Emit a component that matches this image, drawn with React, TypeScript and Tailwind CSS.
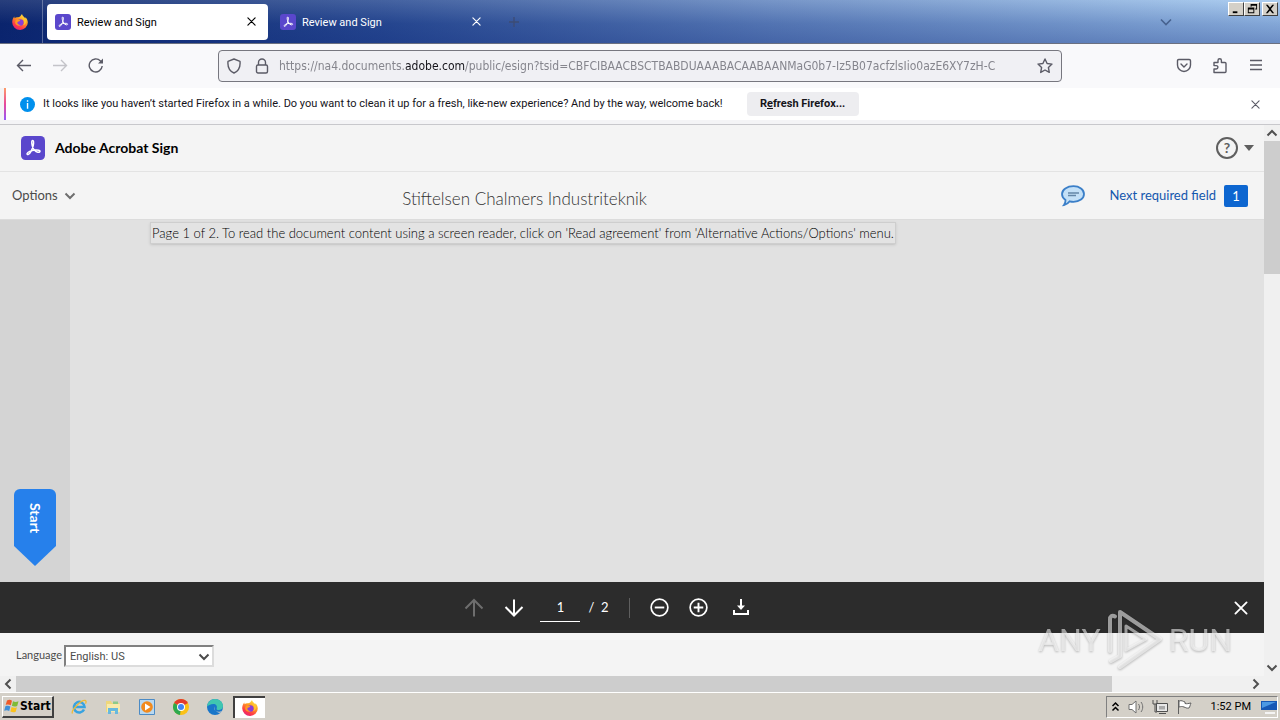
import React from 'react';

const AcrobatLogo: React.FC<{ size: number }> = ({ size }) => (
    <svg width={size} height={size} viewBox="0 0 24 24" fill="none" className="shrink-0">
        <rect width="24" height="24" rx="4.5" fill="#5a47cc" />
        <path
            d="M11.3 4.6c1.4-.5 1.6 2 .9 5-.9 3.8-3.2 8.7-5.1 9-1.7.2-1.4-1.9 1.6-3.2 3.1-1.4 8.4-2.1 9.9-.8 1 .9-.2 2-1.8 1.7-2.4-.5-4.9-3.6-5.6-6.8-.5-2.3-.7-4.6.1-4.9z"
            stroke="#fff"
            strokeWidth="1.5"
            strokeLinejoin="round"
        />
    </svg>
);

const FirefoxIcon: React.FC<{ id: string }> = ({ id }) => (
    <svg width="16" height="16" viewBox="0 0 16 16" className="shrink-0">
        <defs>
            <linearGradient id={id} x1="0.8" y1="0" x2="0.25" y2="1">
                <stop offset="0" stopColor="#fff04a" />
                <stop offset="0.4" stopColor="#ff9a22" />
                <stop offset="0.75" stopColor="#ff3b47" />
                <stop offset="1" stopColor="#e0207c" />
            </linearGradient>
        </defs>
        <path
            d="M10 0c.3 1.5 1.3 2.2 2.3 3.2.4.4.7.8.9 1.2l.2-1.2c1.4 1.4 2.4 3.2 2.4 5.2A7.7 7.7 0 0 1 8 16 7.8 7.8 0 0 1 .2 8.3C.2 6 1 4 2.3 2.5l.3 1.8C3.6 3.3 4.7 3 6 3.3 7.5 3.3 8.7 2 10 0z"
            fill={`url(#${id})`}
        />
        <circle cx="8.3" cy="8.6" r="3.3" fill="#8a3fd8" />
        <path d="M4 6c1.5-.8 3-.6 4.3.4-1 1.2-2.8.6-3 2.3.3 1.8 2.2 2.6 4 2-1.8 2-5.3 1-6-1.4C3 8 3.2 6.8 4 6z" fill="#ff9a22" />
        <path d="M9.5 2.2c.2 2.2 2.7 3 2.7 6 0 1.2-.5 2.2-1.2 3 2.6-.6 3.6-2.9 3-5.2-.6-1.7-3.4-2.2-4.5-3.800z" fill="#ffc52e" />
    </svg>
);

const Cross: React.FC<{ size: number; width?: number }> = ({ size, width = 1.2 }) => (
    <svg width={size} height={size} viewBox="0 0 10 10" stroke="currentColor" strokeWidth={width} strokeLinecap="round">
        <path d="M1 1l8 8M9 1L1 9" />
    </svg>
);

const Chevron: React.FC<{ className?: string }> = ({ className }) => (
    <svg width="12" height="12" viewBox="0 0 12 12" fill="none" stroke="currentColor" strokeWidth="2" className={className}>
        <path d="M1.5 3.5L6 8l4.5-4.5" />
    </svg>
);

const WindowButton: React.FC<{ label: string; children: React.ReactNode }> = ({ label, children }) => (
    <button aria-label={label} className="flex h-3.5 w-4 items-center justify-center border border-b-[#404040] border-l-white border-r-[#404040] border-t-white bg-[#d4d0c8]">
        <svg width="12" height="12" viewBox="0 0 13 13">{children}</svg>
    </button>
);

const TabStrip: React.FC = () => (
    <header className="flex h-11 border-b border-[#6b7080] bg-[linear-gradient(to_bottom,rgba(255,255,255,0.12),rgba(10,36,120,0.2)_55%,rgba(10,36,120,0.35)),linear-gradient(to_right,#0a246a,#2b4d94_30%,#6487c0_60%,#a2c8ef)]">
        <div className="flex w-[43px] items-center justify-center border-r border-white/30 pr-0.5">
            <FirefoxIcon id="ff-tab" />
        </div>
        <div className="ml-1 flex h-9 w-[221px] items-center self-center rounded bg-white pl-2 pr-2.5 text-black">
            <AcrobatLogo size={16} />
            <span className="ml-1.5 flex-1 pt-1 text-[11px]">Review and Sign</span>
            <button aria-label="Close tab" className="p-0.5"><Cross size={9} width={1.3} /></button>
        </div>
        <div className="ml-1 flex h-9 w-[221px] items-center self-center pl-2 pr-2.5 text-white">
            <AcrobatLogo size={16} />
            <span className="ml-1.5 flex-1 pt-1 text-[11px]">Review and Sign</span>
            <button aria-label="Close tab" className="p-0.5"><Cross size={9} width={1.3} /></button>
        </div>
        <button aria-label="New tab" className="ml-4 text-[#3d4c74]">
            <svg width="10" height="10" viewBox="0 0 10 10" stroke="currentColor" strokeWidth="1.3"><path d="M5 0v10M0 5h10" /></svg>
        </button>
        <button aria-label="List all tabs" className="ml-auto mr-14 text-[#47628f]">
            <svg width="12" height="12" viewBox="0 0 12 12" fill="none" stroke="currentColor" strokeWidth="1.6"><path d="M1 3.5l5 5 5-5" /></svg>
        </button>
        <div className="mr-0.5 mt-0.5 flex h-3.5 text-black">
            <WindowButton label="Minimize"><path d="M3 9h5v2H3z" /></WindowButton>
            <WindowButton label="Restore"><path d="M5 1h7v6h-2V6h1V3H6v1H5zM2 5h7v6H2zm1 2v3h5V7z" fillRule="evenodd" /></WindowButton>
            <span className="w-0.5" />
            <WindowButton label="Close"><path d="M2 2h2l2.500 3L9 2h2L7.500 6.500 11 11H9L6.500 8 4 11H2l3.500-4.500z" /></WindowButton>
        </div>
    </header>
);

const NavBar: React.FC = () => (
    <nav className="flex h-11 items-center bg-[#f9f9fb] px-4 text-[#5b5b66]">
        <button aria-label="Back">
            <svg width="16" height="16" viewBox="0 0 16 16" fill="none" stroke="currentColor" strokeWidth="1.4"><path d="M15 7.500H1.500M7 2L1.500 7.500 7 13" /></svg>
        </button>
        <button aria-label="Forward" className="ml-5 text-[#c4c4c9]">
            <svg width="16" height="16" viewBox="0 0 16 16" fill="none" stroke="currentColor" strokeWidth="1.4"><path d="M1 7.500h13.500M9 2l5.500 5.500L9 13" /></svg>
        </button>
        <button aria-label="Reload" className="ml-5">
            <svg width="16" height="16" viewBox="0 0 16 16" fill="none" stroke="currentColor" strokeWidth="1.4"><path d="M14.200 8A6.500 6.500 0 1 1 12.500 3L14 4.500" /><path d="M15 .5v5h-5z" fill="currentColor" stroke="none" /></svg>
        </button>
        <div className="ml-[114px] flex h-8 w-[844px] items-center rounded border border-[#77777f] bg-[#f0f0f4] px-2">
            <svg width="14" height="16" viewBox="0 0 14 16" fill="none" stroke="currentColor" strokeWidth="1.4" className="shrink-0"><path d="M7 1l6 2.300c.5 5-1.500 9.700-6 11.700C2.500 13 .5 8.300 1 3.300z" strokeLinejoin="round" /></svg>
            <svg width="14" height="16" viewBox="0 0 14 16" fill="none" stroke="currentColor" strokeWidth="1.4" className="ml-3.5 shrink-0"><rect x="1.5" y="7" width="11" height="8" rx="1.5" /><path d="M3.500 7V4.500a3.500 3.500 0 0 1 7 0V7" /></svg>
            <div className="ml-2.5 flex-1 overflow-hidden whitespace-nowrap font-['DejaVu_Sans_Condensed','DejaVu_Sans',sans-serif] text-xs text-[#85858d] [mask-image:linear-gradient(to_left,transparent,black_32px)]">
                https://na4.documents.<span className="text-[#15141a]">adobe.com</span>/public/esign?tsid=CBFCIBAACBSCTBABDUAAABACAABAANMaG0b7-Iz5B07acfzlsIio0azE6XY7zH-C
            </div>
            <button aria-label="Bookmark this page" className="ml-2">
                <svg width="16" height="16" viewBox="0 0 16 16" fill="none" stroke="currentColor" strokeWidth="1.4" strokeLinejoin="round"><path d="M8 1l2.100 4.500 4.900.6-3.600 3.400.9 4.900L8 12l-4.300 2.400.9-4.900L1 6.100l4.900-.6z" /></svg>
            </button>
        </div>
        <div className="ml-auto flex gap-5">
            <button aria-label="Save to Pocket">
                <svg width="16" height="16" viewBox="0 0 16 16" fill="none" stroke="currentColor" strokeWidth="1.4" strokeLinecap="round"><path d="M2.800 1.500h10.400c.8 0 1.300.5 1.300 1.300V7a6.500 6.500 0 0 1-13 0V2.800c0-.8.5-1.300 1.300-1.300z" /><path d="M5 6l3 3 3-3" /></svg>
            </button>
            <button aria-label="Extensions">
                <svg width="16" height="16" viewBox="0 0 16 16" fill="none" stroke="currentColor" strokeWidth="1.4" strokeLinejoin="round"><path d="M2 14.500V11h2.200a1.700 1.700 0 0 0 0-3.400H2V4.500h4V2.400a1.700 1.700 0 0 1 3.400 0v2.100H13c.7 0 1 .3 1 1v8c0 .7-.3 1-1 1z" /></svg>
            </button>
            <button aria-label="Open application menu">
                <svg width="16" height="16" viewBox="0 0 16 16" stroke="currentColor" strokeWidth="1.3"><path d="M2 2.500h12M2 7h12M2 11.500h12" /></svg>
            </button>
        </div>
    </nav>
);

const Notification: React.FC = () => (
    <div className="border-b border-[#c8c8cc] bg-[#f4f4f6] pb-1 pl-1">
        <div className="flex h-8 items-center border-l-2 border-[#e0509a] bg-white pl-3.5 pr-5 text-[11px] text-[#15141a] [border-image:linear-gradient(to_bottom,#ffa266,#e8489a,#9059ff)_1]">
            <svg width="15" height="15" viewBox="0 0 16 16" className="shrink-0"><circle cx="8" cy="8" r="8" fill="#0090ed" /><path d="M7.300 3.500h1.500V5H7.300zM7.300 6.500h1.500v6H7.300z" fill="#fff" /></svg>
            <p className="ml-2 whitespace-nowrap">
                It looks like you haven’t started Firefox in a while. Do you want to clean it up for a fresh, like-new experience? And by the way, welcome back!
            </p>
            <button className="ml-6 h-6 w-28 whitespace-nowrap rounded bg-[#ededf0] font-bold">
                R<u>e</u>fresh Firefox...
            </button>
            <button aria-label="Close notification" className="ml-auto text-[#5b5b66]"><Cross size={9} /></button>
        </div>
    </div>
);

const SignHeader: React.FC = () => (
    <header className="bg-[#f4f4f4] text-[#4b4b4b]">
        <div className="flex h-[47px] items-center border-b border-[#e3e3e3] pl-[21px] pr-2.5">
            <AcrobatLogo size={24} />
            <h1 className="ml-2.5 text-sm font-bold text-black">Adobe Acrobat Sign</h1>
            <button aria-label="Help" className="ml-auto flex items-center gap-1.5 text-[#5f5f5f]">
                <span className="flex size-[22px] items-center justify-center rounded-full border-2 border-current text-sm font-bold leading-none">?</span>
                <svg width="10" height="6" viewBox="0 0 10 6" fill="currentColor"><path d="M0 0h10L5 6z" /></svg>
            </button>
        </div>
        <div className="flex h-12 items-center border-b border-[#dcdcdc] pl-3 pr-4">
            <button className="flex items-center gap-1.5 text-[13px]">
                Options <Chevron className="text-[#6e6e6e]" />
            </button>
            <h2 className="flex-1 pr-22 pt-1.5 text-center text-[17px] font-light text-[#323232]">Stiftelsen Chalmers Industriteknik</h2>
            <button aria-label="Comments">
                <svg width="24" height="22" viewBox="0 0 24 22"><path d="M12.500 1.200C18.500 1.200 23 4.500 23 9s-4.500 7.800-10.500 7.800c-1.500 0-2.700-.2-3.800-.5C7.500 18 5.500 19.500 3 20c1-1.300 1.600-3 1.500-5C2.200 13.500 1 11.500 1 9c0-4.500 5-7.800 11.500-7.800z" fill="#c3e0f7" stroke="#3b7fc8" strokeWidth="1.8" /><path d="M7 8h11M7 10.500h8" stroke="#6487a8" strokeWidth="1.6" /></svg>
            </button>
            <button className="ml-6 flex items-center gap-2 text-[13px] text-[#1357ae]">
                Next required field
                <span className="flex h-[22px] w-6 items-center justify-center rounded-xs bg-[#0d66d0] pt-0.5 text-white">1</span>
            </button>
        </div>
    </header>
);

const Viewer: React.FC = () => (
    <main className="flex flex-1 bg-[#e1e1e1]">
        <aside className="flex w-[70px] flex-col items-center justify-end bg-[#d4d4d4] pb-4">
            <button className="flex h-[77px] w-[42px] items-start justify-center rounded-t-md bg-[#2680eb] pt-3.5 text-sm font-bold text-white [clip-path:polygon(0_0,100%_0,100%_74%,50%_100%,0_74%)]">
                <span className="[writing-mode:vertical-rl]">Start</span>
            </button>
        </aside>
        <div className="pl-20 pt-0.5">
            <p className="whitespace-nowrap border border-[#cecece] bg-[#e3e3e3] px-px text-[13px] font-light leading-5 text-black shadow-sm">
                Page 1 of 2. To read the document content using a screen reader, click on 'Read agreement' from 'Alternative Actions/Options' menu.
            </p>
        </div>
    </main>
);

const PageToolbar: React.FC = () => (
    <div className="flex h-[51px] items-center bg-[#2c2c2c] px-4 text-white">
        <div className="flex flex-1 items-center justify-center pr-9">
            <button aria-label="Previous page" className="text-[#6e6e6e]">
                <svg width="20" height="20" viewBox="0 0 20 20" fill="none" stroke="currentColor" strokeWidth="2"><path d="M10 18.500V2.500M1.500 10.500L10 2l8.500 8.500" /></svg>
            </button>
            <button aria-label="Next page" className="ml-5">
                <svg width="20" height="20" viewBox="0 0 20 20" fill="none" stroke="currentColor" strokeWidth="2"><path d="M10 1.500v16M1.500 9l8.500 8.500L18.500 9" /></svg>
            </button>
            <input aria-label="Page number" defaultValue="1" className="ml-4 h-7 w-10 border-b border-white bg-transparent text-center text-[13px]" />
            <span className="ml-2 whitespace-pre text-[13px]">/  2</span>
            <span className="ml-5 h-5 w-px bg-[#5f5f5f]" />
            <button aria-label="Zoom out" className="ml-5">
                <svg width="19" height="19" viewBox="0 0 20 20" fill="none" stroke="currentColor" strokeWidth="1.8"><circle cx="10" cy="10" r="8.8" /><path d="M5 10h10" strokeWidth="2" /></svg>
            </button>
            <button aria-label="Zoom in" className="ml-5">
                <svg width="19" height="19" viewBox="0 0 20 20" fill="none" stroke="currentColor" strokeWidth="1.8"><circle cx="10" cy="10" r="8.8" /><path d="M5 10h10M10 5v10" strokeWidth="2" /></svg>
            </button>
            <button aria-label="Download" className="ml-6">
                <svg width="18" height="18" viewBox="0 0 18 18" fill="none" stroke="currentColor" strokeWidth="2"><path d="M9 0v8M2 11v4h14v-4" /><path d="M5 6.500h8L9 11z" fill="currentColor" stroke="none" /></svg>
            </button>
        </div>
        <button aria-label="Close toolbar"><Cross size={14} width={1.3} /></button>
    </div>
);

const LanguageBar: React.FC = () => (
    <footer className="flex h-[43px] items-center bg-[#f4f4f4] pb-0.5 pl-4 pt-1 text-[#4b4b4b]">
        <label htmlFor="language" className="mr-0.5 text-[11px]">Language</label>
        <div className="relative">
            <select id="language" className="block h-[22px] w-[150px] appearance-none border-2 border-b-[#dcdcdc] border-l-[#808080] border-r-[#dcdcdc] border-t-[#808080] bg-white pl-1 pt-0.5 font-[Roboto,sans-serif] text-[11px]">
                <option>English: US</option>
            </select>
            <Chevron className="pointer-events-none absolute right-1 top-1.5" />
        </div>
    </footer>
);

const Watermark: React.FC = () => (
    <div className="pointer-events-none absolute bottom-5 right-12 flex items-center gap-1.5 font-[Roboto,sans-serif] text-[32px] leading-none text-white/55 drop-shadow-[0_1px_1px_rgba(0,0,0,0.45)]">
        <span>ANY</span>
        <svg width="56" height="64" viewBox="0 0 56 64" fill="none" stroke="currentColor" strokeLinejoin="round" strokeLinecap="round">
            <path d="M8 8.500c-3-2-5 0-5 3V43" strokeWidth="4" />
            <path d="M4 53l9-5V4l40 27-40 28" strokeWidth="4" />
            <path d="M19 42V18l20 13z" strokeWidth="3" />
        </svg>
        <span>RUN</span>
    </div>
);

const Taskbar: React.FC = () => (
    <footer className="flex h-7 items-center border-t border-white bg-[#d4d0c8] px-0.5 text-[11px] text-black shadow-[0_-1px_0_#d4d0c8]">
        <button className="flex h-[22px] w-[52px] items-center border border-b-2 border-r-2 border-b-[#404040] border-l-white border-r-[#404040] border-t-white pl-px font-['DejaVu_Sans_Condensed','DejaVu_Sans',sans-serif] text-xs font-bold">
            <svg width="16" height="16" viewBox="0 0 16 16" className="shrink-0">
                <path d="M3 2.500c2-1 3.500-.8 5 .2L6.800 7.300C5.300 6.500 3.500 6.300 1.700 7z" fill="#ef5a28" />
                <path d="M9 3.200c1.800 1 3.500.9 5.500 0L13.200 8c-2 .8-3.700.7-5.300-.2z" fill="#7fbb37" />
                <path d="M1.400 8.200c2-.8 3.600-.5 5 .3L5.200 13c-1.500-.9-3.200-1-5-.2z" fill="#3f8fd8" />
                <path d="M7.600 9c1.700.9 3.300 1 5.300.2l-1.200 4.600c-2 .8-3.600.6-5.300-.3z" fill="#fbc21c" />
            </svg>
            Start
        </button>
        <div className="ml-4 flex items-center gap-[18px]">
            <button aria-label="Internet Explorer" className="pl-px">
                <svg width="16" height="16" viewBox="0 0 16 16" fill="none"><path d="M13 10.500A5.300 5.300 0 1 1 13.500 8H4" stroke="#38a3e0" strokeWidth="2.600" /><path d="M1.500 14.500c-2-3 8.500-13.500 12.700-13 1.300.3 1 2 .3 3.200" stroke="#efbb35" strokeWidth="1.300" /></svg>
            </button>
            <button aria-label="Windows Explorer">
                <svg width="16" height="16" viewBox="0 0 16 16"><path d="M1 2h5l1 2h7v9H1z" fill="#eed77c" /><path d="M2 5h13v8H2z" fill="#f8eaab" /><path d="M3 15V9h10v6h-3v-3H6v3z" fill="#68b9de" /><path d="M8 2.500h5V5H8z" fill="#8dca8a" /></svg>
            </button>
            <button aria-label="Media Player">
                <svg width="16" height="16" viewBox="0 0 16 16"><path d="M.5.5h15v15H.5z" fill="#b9d8f0" stroke="#4c8bc5" /><circle cx="8" cy="8" r="5.800" fill="#f28a1d" /><path d="M6 4.500v7L11.500 8z" fill="#fff" /></svg>
            </button>
            <button aria-label="Chrome">
                <svg width="16" height="16" viewBox="0 0 16 16"><circle cx="8" cy="8" r="8" fill="#fbc116" /><path d="M8 8L1.100 4A8 8 0 0 1 14.900 4z" fill="#e33b2e" /><path d="M8 8l-1 8A8 8 0 0 1 1.100 4z" fill="#2da94f" /><circle cx="8" cy="8" r="4" fill="#fff" /><circle cx="8" cy="8" r="3" fill="#4285f4" /></svg>
            </button>
            <button aria-label="Edge">
                <svg width="16" height="16" viewBox="0 0 16 16"><circle cx="8" cy="8" r="8" fill="#1976c9" /><path d="M0 7.500C.5 3 4 0 8 0c5 0 8 3.700 8 7 0 2.500-2 4-4.300 4-1.700 0-2.500-.7-2-1.500C10.500 7 9 5 6.300 5 3.500 5 1 6.500 0 7.500z" fill="#40c6b0" /><path d="M7.500 7.500c-1.200 2 .2 5 3.500 5.300 2 .1 3-.3 4-1-.3.8-1 1.500-1.500 2-4 0-7-3-6-6.300z" fill="#d4d0c8" /></svg>
            </button>
        </div>
        <button aria-label="Firefox" className="ml-2.5 flex h-[22px] w-8 items-center justify-center border-l-2 border-t-2 border-[#404040] bg-white">
            <FirefoxIcon id="ff-task" />
        </button>
        <div className="ml-auto flex h-[22px] w-[172px] items-center border border-b-white border-l-[#808080] border-r-white border-t-[#808080] pl-1 text-black">
            <svg width="9" height="11" viewBox="0 0 9 11" fill="none" stroke="currentColor" strokeWidth="1.5"><path d="M1.500 5l3-3 3 3M1.500 9.500l3-3 3 3" /></svg>
            <svg width="18" height="16" viewBox="0 0 18 16" fill="#fff" stroke="#707070" className="ml-2"><path d="M1 5.500h3L8 2v12L4 10.500H1z" /><path d="M10.500 5c1.300 1.800 1.300 4.200 0 6M13 3c2.300 3 2.300 7 0 10" fill="none" /></svg>
            <svg width="16" height="16" viewBox="0 0 16 16" fill="#e8e8e8" stroke="#505050" className="ml-1.5"><path d="M4.500 4.500h11v8h-11zM7 14.500h7" /><path d="M7 7h6v3.500H7z" fill="#aaa" stroke="none" /><path d="M1 1v4h4V1M3 5v8h2" fill="none" /></svg>
            <svg width="17" height="16" viewBox="0 0 17 16" fill="#fff" stroke="#606060" className="ml-2"><path d="M3 2c3-1 4 .5 6 1v1.500c2 .5 3 0 6-.5-1 2-1 4-2 5-3 .5-3-.5-5-1-2-.8-3-.5-5 0zM2.500 1v14" /></svg>
            <time className="ml-auto mr-2.5 whitespace-nowrap pt-0.5">1:52 PM</time>
            <svg width="16" height="14" viewBox="0 0 16 14"><path d="M0 1h16v9H0z" fill="#1657b5" /><path d="M1 2h14L1 8z" fill="#4b98e4" /><path d="M4 12h10v2H4z" fill="#f4f4f4" /></svg>
        </div>
    </footer>
);

const App: React.FC = () => {
    return (
        <div className="flex min-h-screen flex-col font-[Roboto,sans-serif]">
            <TabStrip />
            <NavBar />
            <Notification />
            <div className="relative flex flex-1 flex-col">
                <div className="flex flex-1">
                    <div className="flex min-w-0 flex-1 flex-col font-[Lato,sans-serif]">
                        <SignHeader />
                        <Viewer />
                        <PageToolbar />
                        <LanguageBar />
                    </div>
                    {/* Vertical scrollbar */}
                    <div className="flex w-4 flex-col items-center bg-[#f0f0f0] text-[#505050]">
                        <Chevron className="my-0.5 shrink-0 rotate-180" />
                        <div className="h-[133px] w-full bg-[#cdcdcd]" />
                        <Chevron className="mb-0.5 mt-auto shrink-0" />
                    </div>
                </div>
                {/* Horizontal scrollbar */}
                <div className="flex h-4 items-center bg-[#f0f0f0] pl-0.5 pr-[18px] text-[#505050]">
                    <Chevron className="mr-0.5 rotate-90" />
                    <div className="h-full w-[87%] bg-[#cdcdcd]" />
                    <Chevron className="ml-auto -rotate-90" />
                </div>
                <Watermark />
            </div>
            <Taskbar />
        </div>
    );
};

export default App;
